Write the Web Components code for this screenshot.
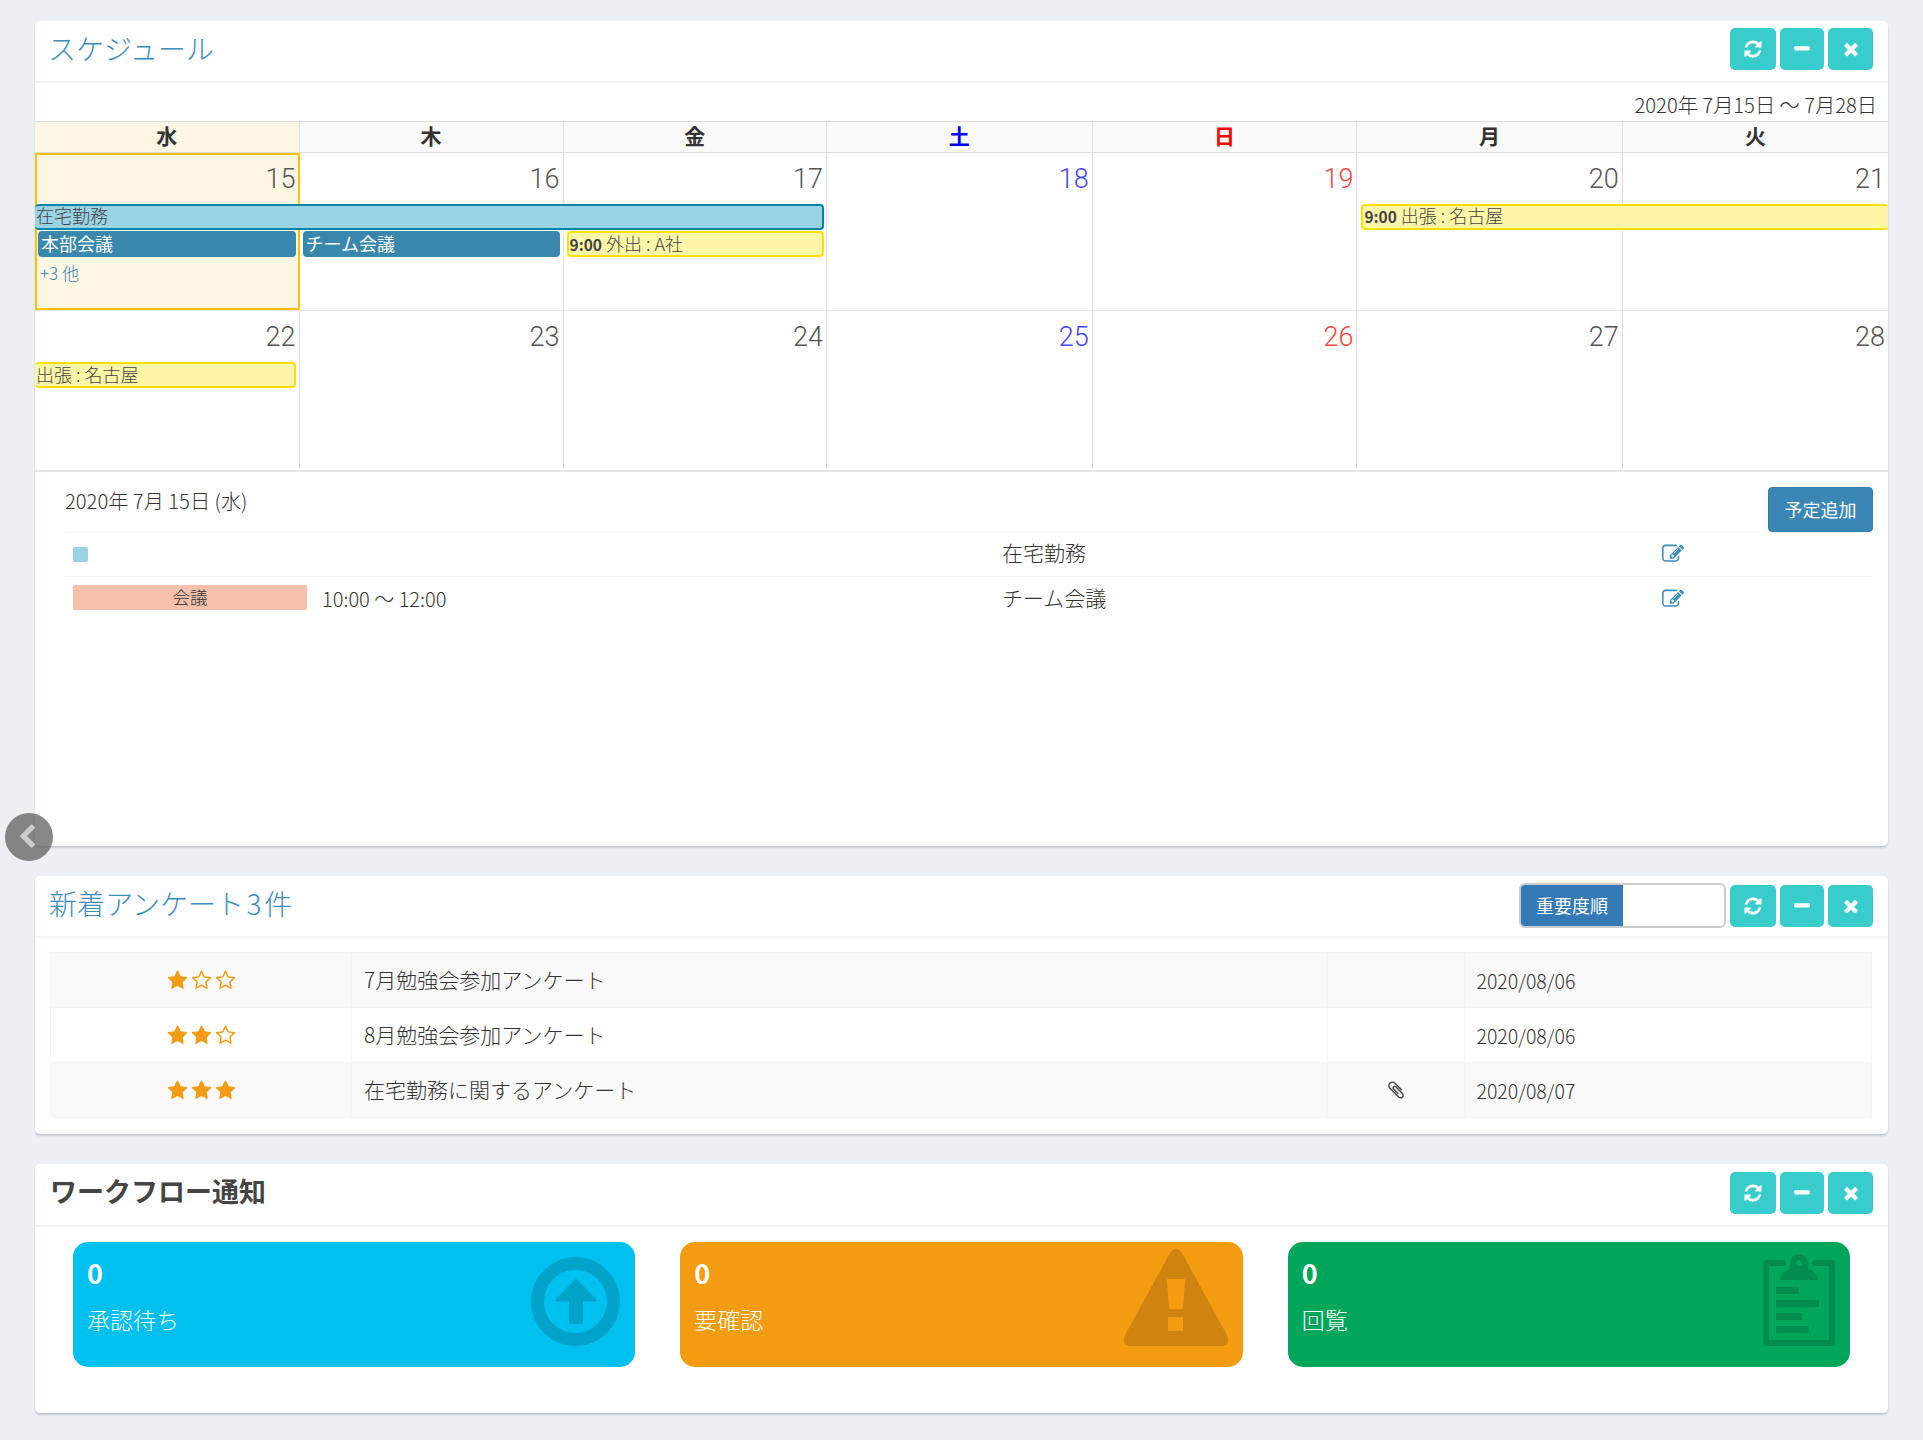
<!DOCTYPE html>
<html lang="ja"><head><meta charset="utf-8"><title>Dashboard</title>
<style>
html,body{margin:0;padding:0;background:#ecf0f5}
body{font-family:"Noto Sans CJK JP","Noto Sans",sans-serif;font-weight:300;color:#333;font-size:18px;height:1440px;overflow:hidden}
</style></head><body>
<x-dashboard>
  <x-panel style="--hdr-top:7px;--title-ml:-2px">
    <span slot="title">スケジュール</span>
    <x-tools slot="tools"></x-tools>
    <x-calendar range="2020年 7月15日 〜 7月28日">
      <x-weekhead>
        <x-wd today>水</x-wd><x-wd>木</x-wd><x-wd>金</x-wd><x-wd style="color:#00f">土</x-wd><x-wd style="color:#f00">日</x-wd><x-wd>月</x-wd><x-wd last>火</x-wd>
      </x-weekhead>
      <x-week>
        <x-day col="1" today n="15"></x-day><x-day col="2" n="16"></x-day><x-day col="3" n="17"></x-day><x-day col="4" n="18" c="#4444ff"></x-day><x-day col="5" n="19" c="#ff4444"></x-day><x-day col="6" n="20"></x-day><x-day col="7" n="21" last></x-day>
        <x-event kind="teal" style="--lh:19px;grid-column:1/span 3;grid-row:2;margin-right:3px">在宅勤務</x-event>
        <x-event kind="yellow" style="--lh:19px;grid-column:6/span 2;grid-row:2;margin-left:4px;border-right:0"><b>9:00</b> 出張 : 名古屋</x-event>
        <x-event kind="blue" style="grid-column:1;grid-row:3;margin:0 4px 0 3px">本部会議</x-event>
        <x-event kind="blue" style="grid-column:2;grid-row:3;margin:0 4px 0 3px">チーム会議</x-event>
        <x-event kind="yellow" style="grid-column:3;grid-row:3;margin:0 3px"><b>9:00</b> 外出 : A社</x-event>
        <x-more style="grid-column:1;grid-row:4">+3 他</x-more>
      </x-week>
      <x-week>
        <x-day col="1" n="22"></x-day><x-day col="2" n="23"></x-day><x-day col="3" n="24"></x-day><x-day col="4" n="25" c="#4444ff"></x-day><x-day col="5" n="26" c="#ff4444"></x-day><x-day col="6" n="27"></x-day><x-day col="7" n="28" last></x-day>
        <x-event kind="yellow" style="grid-column:1;grid-row:2;margin-right:4px;border-left:0">出張 : 名古屋</x-event>
      </x-week>
    </x-calendar>
    <x-agenda date="2020年 7月 15日 (水)">
      <x-agenda-row title-text="在宅勤務"><x-swatch slot="tag"></x-swatch></x-agenda-row>
      <x-agenda-row title-text="チーム会議" time="10:00 〜 12:00"><x-label slot="tag">会議</x-label></x-agenda-row>
    </x-agenda>
  </x-panel>

  <x-panel style="--hdr-top:9px;--title-ml:-1px">
    <span slot="title">新着アンケート<span style="word-spacing:-3.500px"> 3 </span>件</span>
    <x-toggle slot="tools">重要度順</x-toggle>
    <x-tools slot="tools"></x-tools>
    <x-survey>
      <x-survey-row stars="1" date="2020/08/06">7月勉強会参加アンケート</x-survey-row>
      <x-survey-row stars="2" date="2020/08/06">8月勉強会参加アンケート</x-survey-row>
      <x-survey-row stars="3" date="2020/08/07" clip>在宅勤務に関するアンケート</x-survey-row>
    </x-survey>
  </x-panel>

  <x-panel style="--hdr-top:8px;--hdr-h:61px;--title-w:700;--title-c:#444;--title-s:27px">
    <span slot="title">ワークフロー通知</span>
    <x-tools slot="tools"></x-tools>
    <x-stats>
      <x-stat color="#00c0ef" icon="up" label="承認待ち">0</x-stat>
      <x-stat color="#f39c12" icon="warn" label="要確認">0</x-stat>
      <x-stat color="#00a65a" icon="clip" label="回覧">0</x-stat>
    </x-stats>
  </x-panel>
</x-dashboard>
<x-back></x-back>
<script>
const P={
 refresh:"M1639 1056q0 5-1 7-64 268-268 434.5t-478 166.5q-146 0-282.5-55t-243.5-157l-129 129q-19 19-45 19t-45-19-19-45v-448q0-26 19-45t45-19h448q26 0 45 19t19 45-19 45l-137 137q71 66 161 102t187 36q134 0 250-65t186-179q11-17 53-117 8-23 30-23h192q13 0 22.5 9.5t9.5 22.5zm25-800v448q0 26-19 45t-45 19h-448q-26 0-45-19t-19-45 19-45l138-138q-148-137-349-137-134 0-250 65t-186 179q-11 17-53 117-8 23-30 23h-199q-13 0-22.5-9.5t-9.5-22.5v-7q65-268 270-434.5t480-166.5q146 0 284 55.500t245 156.500l130-129q19-19 45-19t45 19 19 45z",
 minus:"M1600 736v192q0 40-28 68t-68 28h-1216q-40 0-68-28t-28-68v-192q0-40 28-68t68-28h1216q40 0 68 28t28 68z",
 times:"M1490 1322q0 40-28 68l-136 136q-28 28-68 28t-68-28l-294-294-294 294q-28 28-68 28t-68-28l-136-136q-28-28-28-68t28-68l294-294-294-294q-28-28-28-68t28-68l136-136q28-28 68-28t68 28l294 294 294-294q28-28 68-28t68 28l136 136q28 28 28 68t-28 68l-294 294 294 294q28 28 28 68z",
 star:"M1728 647q0 22-26 48l-363 354 86 500q1 7 1 20 0 21-10.500 35.500t-30.500 14.500q-19 0-40-12l-449-236-449 236q-22 12-40 12-21 0-31.500-14.500t-10.500-35.500q0-6 2-20l86-500-364-354q-25-27-25-48 0-37 56-46l502-73 225-455q19-41 49-41t49 41l225 455 502 73q56 9 56 46z",
 staro:"M1201 1004l306-297-422-62-189-382-189 382-422 62 306 297-73 421 378-199 377 199zm527-357q0 22-26 48l-363 354 86 500q1 7 1 20 0 50-41 50-19 0-40-12l-449-236-449 236q-22 12-40 12-21 0-31.500-14.500t-10.500-35.500q0-6 2-20l86-500-364-354q-25-27-25-48 0-37 56-46l502-73 225-455q19-41 49-41t49 41l225 455 502 73q56 9 56 46z",
 edit:"M888 1184l116-116-152-152-116 116v56h96v96h56zm440-720q-16-16-33 1l-350 350q-17 17-1 33t33-1l350-350q17-17 1-33zm80 594v190q0 119-84.500 203.500t-203.500 84.500h-832q-119 0-203.500-84.500t-84.500-203.500v-832q0-119 84.500-203.500t203.500-84.500h832q63 0 117 25 15 7 18 23 3 17-9 29l-49 49q-14 14-32 8-23-6-45-6h-832q-66 0-113 47t-47 113v832q0 66 47 113t113 47h832q66 0 113-47t47-113v-126q0-13 9-22l64-64q15-15 35-7t20 29zm-96-738l288 288-672 672h-288v-288zm444 132l-92 92-288-288 92-92q28-28 68-28t68 28l152 152q28 28 28 68t-28 68z",
 clip:"M1596 1385q0 117-79 196t-196 79q-135 0-235-100l-777-776q-113-115-113-271 0-159 110-270t269-111q158 0 273 113l605 606q10 10 10 22 0 16-30.500 46.500t-46.500 30.500q-13 0-23-10l-606-607q-79-77-181-77-106 0-179 75t-73 181q0 105 76 181l776 777q63 63 145 63 64 0 106-42t42-106q0-82-63-145l-581-581q-26-24-60-24-29 0-48 19t-19 48q0 32 25 59l410 410q10 10 10 22 0 16-31 47t-47 31q-12 0-22-10l-410-410q-63-61-63-149 0-82 57-139t139-57q88 0 149 63l581 581q100 98 100 235z",
 left:"M1427 301l-531 531 531 531q19 19 19 45t-19 45l-166 166q-19 19-45 19t-45-19l-742-742q-19-19-19-45t19-45l742-742q19-19 45-19t45 19l166 166q19 19 19 45t-19 45z"
};
const fa=(n,s,c='currentColor')=>`<svg width="${s}" height="${s}" viewBox="0 0 1792 1792" fill="${c}"><path d="${P[n]}"/></svg>`;
const BIG={
 up:`<circle cx="59.500" cy="55.500" r="38" fill="none" stroke="#000" stroke-width="13"/><path d="M59 33.500Q60 32.500 61 33.500L81 54Q81.500 55.500 80 55.500L67 55.500 67 77Q67 78 66 78L54 78Q53 78 53 77L53 55.500 40 55.500Q38.500 55.500 39 54Z"/>`,
 warn:`<path fill-rule="evenodd" d="M46 7Q52 -1 58 7L103 89Q107 100 97 100L7 100Q-3 100 1 89ZM44 33L60 33Q61 33 61 34L59 62Q59 63 58 63L46 63Q45 63 45 62L43 34Q43 33 44 33ZM45 71L58 71Q59 71 59 72L59 84Q59 85 58 85L45 85Q44 85 44 84L44 72Q44 71 45 71Z"/>`,
 clip:`<path d="M52 17H35V97H101V17H84" fill="none" stroke="#000" stroke-width="6" stroke-linejoin="round" stroke-linecap="round"/><path fill-rule="evenodd" d="M49 34Q50 26 59 23L59 17A9 9 0 0 1 77 17L77 23Q86 26 87 34ZM68 14A3 3 0 1 0 68 20A3 3 0 1 0 68 14Z"/><rect x="45" y="41" width="23" height="7"/><rect x="45" y="54" width="43" height="7"/><rect x="45" y="67" width="26" height="7"/><rect x="45" y="80" width="33" height="7"/>`
};
const COLS='264.500px 264px 263.500px 265.700px 264.700px 265.400px minmax(0,1fr)';
function def(name,css,html){
  customElements.define(name,class extends HTMLElement{
    constructor(){super();this.attachShadow({mode:'open'});}
    connectedCallback(){
      const h=typeof html==='function'?html(this):html;
      this.shadowRoot.innerHTML=`<style>${css}</style>${h}`;
    }
  });
}
def('x-dashboard',`:host{display:flex;flex-direction:column;gap:30px;padding:21px 35px 0 35px}`,`<slot></slot>`);
def('x-panel',`
 :host{display:block;background:#fff;border-radius:5px;box-shadow:0 2px 2px rgba(0,0,0,.16)}
 header{display:flex;justify-content:space-between;align-items:flex-start;height:var(--hdr-h,60px);border-bottom:2px solid #f4f4f4;padding:0 15px}
 .t{font-size:var(--title-s,28px);line-height:54px;color:var(--title-c,#3c8dbc);font-weight:var(--title-w,300);white-space:pre;margin-left:var(--title-ml,0)}
 .r{display:flex;padding-top:var(--hdr-top,7px);gap:4px}
`,`<header><div class="t"><slot name="title"></slot></div><div class="r"><slot name="tools"></slot></div></header><slot></slot>`);
def('x-tool',`:host{display:flex;align-items:center;justify-content:center;width:var(--w,44px);height:42px;background:#39cccc;border-radius:5px;color:#fff}
 svg{display:block}`,el=>fa(el.getAttribute('i'),20));
def('x-tools',`:host{display:flex;gap:4px}`,`<x-tool i="refresh" style="--w:46px"></x-tool><x-tool i="minus"></x-tool><x-tool i="times" style="--w:45px"></x-tool>`);
def('x-toggle',`:host{display:flex;box-sizing:border-box;width:207px;height:45px;margin:-2px 0 0 0;border:2px solid #ccc;border-radius:6px;background:#fff;overflow:hidden}
 span{display:flex;align-items:center;justify-content:center;width:102px;margin:0;padding-bottom:2px;box-sizing:border-box;background:#337ab7;color:#fff;font-size:18px;font-weight:400}`,`<span><slot></slot></span>`);
def('x-calendar',`:host{display:block}
 .range{height:38px;line-height:44px;text-align:right;padding-right:11px;font-size:20.200px;color:#333}`,
 el=>`<div class="range">${el.getAttribute('range')}</div><slot></slot>`);
def('x-weekhead',`:host{display:grid;grid-template-columns:${COLS};height:32px;box-sizing:border-box;border-top:1px solid #ddd;border-bottom:1px solid #ddd;background:#f9f9f9}`,`<slot></slot>`);
def('x-wd',`:host{display:block;text-align:center;font-weight:700;font-size:21px;line-height:26px;border-right:1px solid #e4e4e4}
 :host([today]){background:#fcf7e3}:host([last]){border-right:0}`,`<slot></slot>`);
def('x-week',`:host{display:grid;grid-template-columns:${COLS};grid-template-rows:51px 27px 27px 1fr;height:158px;box-sizing:border-box;border-bottom:1px solid #e4e4e4}
 :host(:last-child){border-bottom:0;margin-bottom:1px}`,`<slot></slot>`);
def('x-day',`:host{display:block;grid-row:1/-1;grid-column:var(--col);border-right:1px solid #ddd;box-sizing:border-box;text-align:right;font-family:Roboto,"Noto Sans CJK JP",sans-serif;font-size:27px;font-weight:300;line-height:53px;padding-right:3px;color:var(--c,#555)}
 :host([last]){border-right:0}
 :host([today]){background:#fcf7e3;border:2px solid #fcc10a;line-height:49px;padding-right:2px}`,
 el=>{el.style.setProperty('--col',el.getAttribute('col'));if(el.getAttribute('c'))el.style.setProperty('--c',el.getAttribute('c'));return `<span>${el.getAttribute('n')}</span>`});
def('x-event',`:host{display:block;box-sizing:border-box;height:26px;border:2px solid;border-radius:4px;font-size:18px;line-height:var(--lh,20px);padding-left:1px;white-space:nowrap;color:#444;z-index:1;position:relative}
 :host([kind=teal]){background:#99d3e4;border-color:#0084a8;border-left:0}
 :host([kind=yellow]){background:#fff6a7;border-color:#ffe000}
 :host([kind=blue]){background:#3a87ad;border-color:#3a87ad;color:#fff;font-weight:400;padding-left:1px}
 ::slotted(b){font-weight:700;font-size:15.500px}`,`<slot></slot>`);
def('x-more',`:host{display:block;z-index:1;position:relative;font-size:17px;line-height:30px;padding-left:5px;color:#2f82b3}`,`<slot></slot>`);
def('x-agenda',`:host{display:block;border-top:2px solid #e6e6e6;padding:0 15px 0 30px;height:376px;box-sizing:border-box}
 .h{display:flex;justify-content:space-between;height:61px;align-items:flex-start;border-bottom:1px solid #f4f4f4;box-sizing:border-box}
 .d{line-height:57px;font-size:20.200px;color:#333}
 button{all:unset;display:block;width:105px;height:45px;margin-top:15px;box-sizing:border-box;border:1px solid #367fa9;border-radius:4px;color:#fff;font-size:18px;font-weight:400;text-align:center;line-height:41px;font-family:inherit;background:#3a87b5}`,
 el=>`<div class="h"><div class="d">${el.getAttribute('date')}</div><button>予定追加</button></div><slot></slot>`);
def('x-agenda-row',`:host{display:grid;grid-template-columns:257px 681px 659px 1fr;height:45px;align-items:center;border-bottom:1px solid #f4f4f4;box-sizing:border-box;font-size:20px}
 :host(:first-of-type){height:44px}
 :host(:last-child){border-bottom:0}
 .tag{display:flex;padding-left:8px}
 .time{font-size:20px;margin-top:-2px;color:#333}
 .ti{font-size:21px;color:#333;margin-top:-6px;margin-left:-1px}
 svg{display:block;color:#3c8dbc;margin-top:-2px}`,
 el=>`<div class="tag" style="grid-column:1"><slot name="tag"></slot></div><div class="time">${el.getAttribute('time')||''}</div><div class="ti">${el.getAttribute('title-text')}</div><div>${fa('edit',22)}</div>`);
def('x-swatch',`:host{display:block;width:15px;height:15px;background:#99d3e4;border-radius:2px}`,``);
def('x-label',`:host{display:block;box-sizing:border-box;width:234px;height:25px;background:#f4c0ab;border-radius:2px;text-align:center;line-height:24px;margin-top:-5px;color:#333;font-size:17.500px}`,`<slot></slot>`);
def('x-survey',`:host{display:block;margin:14px 16px 16px 15px;border:1px solid #f4f4f4;border-bottom:0}`,`<slot></slot>`);
def('x-survey-row',`:host{display:grid;grid-template-columns:301px 975.500px 137px 1fr;height:55px;border-bottom:1px solid #f4f4f4;box-sizing:border-box}
 :host(:nth-child(odd)){background:#f9f9f9}
 div{display:flex;align-items:center;border-right:1px solid #f4f4f4;min-width:0}
 div:last-child{border-right:0;padding-left:12px;font-size:19.500px;color:#333}
 .s{justify-content:center;gap:3px;color:#f39c12}
 .n{padding-left:12px;font-size:21px;color:#333;padding-bottom:2px}
 .c{justify-content:center;color:#444}
 svg{display:block}`,
 el=>{const n=+el.getAttribute('stars');let s='';for(let i=0;i<3;i++)s+=fa(i<n?'star':'staro',21);
  return `<div class="s">${s}</div><div class="n"><slot></slot></div><div class="c">${el.hasAttribute('clip')?fa('clip',20):''}</div><div>${el.getAttribute('date')}</div>`;});
def('x-stats',`:host{display:grid;grid-template-columns:repeat(3,minmax(0,1fr));gap:45px;padding:15px 38px 46px 38px}`,`<slot></slot>`);
def('x-stat',`:host{display:flex;justify-content:space-between;height:125px;border-radius:15px;color:#fff;padding:0 15px 0 14px;box-sizing:border-box;background:var(--bg)}
 .n{font-size:27px;font-weight:700;line-height:30px;margin-top:16px}
 .l{font-size:23px;line-height:34px;margin-top:14px;font-weight:300}
 svg{display:block;margin-top:4px;opacity:.15;overflow:visible}`,
 el=>{el.style.setProperty('--bg',el.getAttribute('color'));
  return `<div><div class="n"><slot></slot></div><div class="l">${el.getAttribute('label')}</div></div><svg width="104" height="104" viewBox="0 0 104 104">${BIG[el.getAttribute('icon')]}</svg>`;});
def('x-back',`:host{position:absolute;left:5px;top:813px;width:48px;height:48px;border-radius:50%;background:rgba(90,90,90,.72);display:flex;align-items:center;justify-content:center;color:#ccc;z-index:5}
 svg{display:block;margin-right:4px}`,()=>fa('left',26));
</script>
</body></html>
